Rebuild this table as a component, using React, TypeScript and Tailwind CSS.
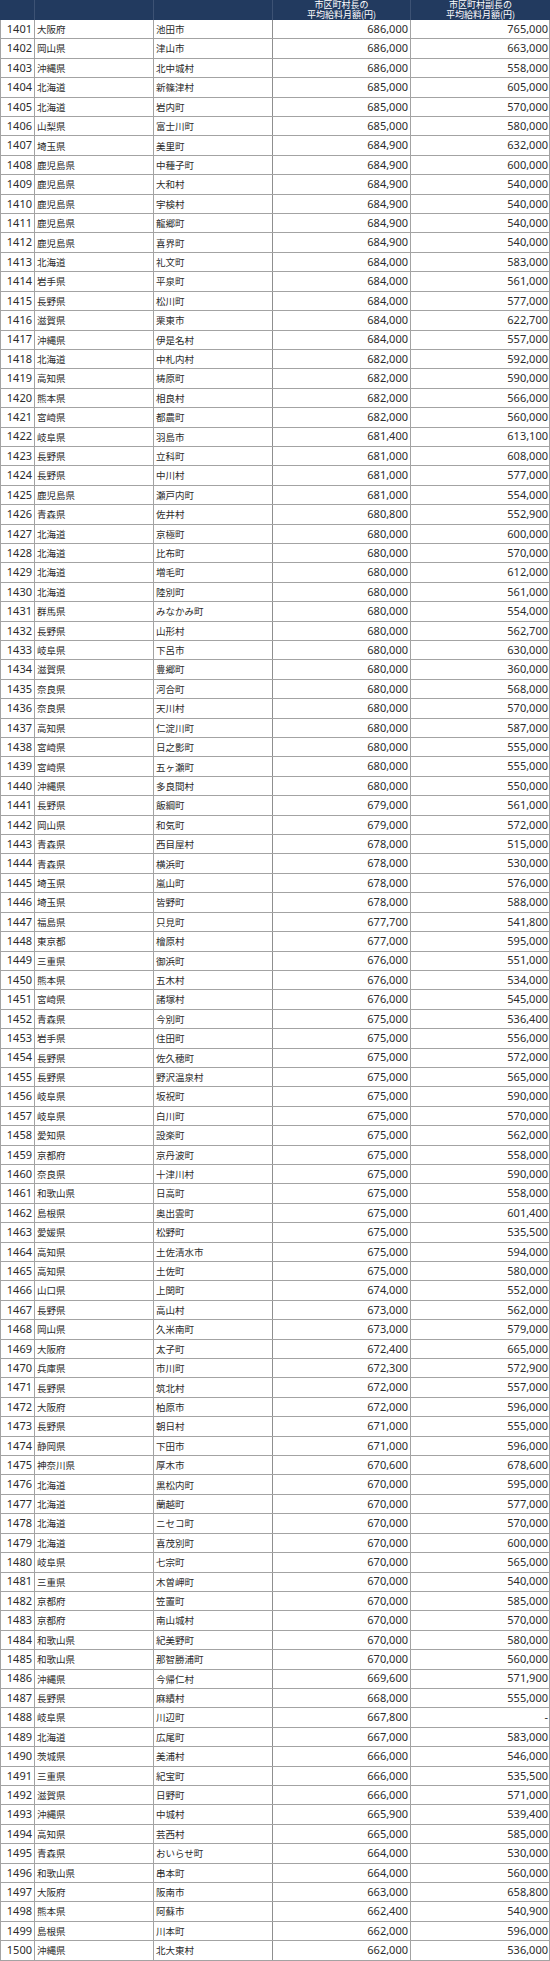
const rows: [string, string, string, string][] = [
  ["大阪府", "池田市", "686,000", "765,000"],
  ["岡山県", "津山市", "686,000", "663,000"],
  ["沖縄県", "北中城村", "686,000", "558,000"],
  ["北海道", "新篠津村", "685,000", "605,000"],
  ["北海道", "岩内町", "685,000", "570,000"],
  ["山梨県", "富士川町", "685,000", "580,000"],
  ["埼玉県", "美里町", "684,900", "632,000"],
  ["鹿児島県", "中種子町", "684,900", "600,000"],
  ["鹿児島県", "大和村", "684,900", "540,000"],
  ["鹿児島県", "宇検村", "684,900", "540,000"],
  ["鹿児島県", "龍郷町", "684,900", "540,000"],
  ["鹿児島県", "喜界町", "684,900", "540,000"],
  ["北海道", "礼文町", "684,000", "583,000"],
  ["岩手県", "平泉町", "684,000", "561,000"],
  ["長野県", "松川町", "684,000", "577,000"],
  ["滋賀県", "栗東市", "684,000", "622,700"],
  ["沖縄県", "伊是名村", "684,000", "557,000"],
  ["北海道", "中札内村", "682,000", "592,000"],
  ["高知県", "梼原町", "682,000", "590,000"],
  ["熊本県", "相良村", "682,000", "566,000"],
  ["宮崎県", "都農町", "682,000", "560,000"],
  ["岐阜県", "羽島市", "681,400", "613,100"],
  ["長野県", "立科町", "681,000", "608,000"],
  ["長野県", "中川村", "681,000", "577,000"],
  ["鹿児島県", "瀬戸内町", "681,000", "554,000"],
  ["青森県", "佐井村", "680,800", "552,900"],
  ["北海道", "京極町", "680,000", "600,000"],
  ["北海道", "比布町", "680,000", "570,000"],
  ["北海道", "増毛町", "680,000", "612,000"],
  ["北海道", "陸別町", "680,000", "561,000"],
  ["群馬県", "みなかみ町", "680,000", "554,000"],
  ["長野県", "山形村", "680,000", "562,700"],
  ["岐阜県", "下呂市", "680,000", "630,000"],
  ["滋賀県", "豊郷町", "680,000", "360,000"],
  ["奈良県", "河合町", "680,000", "568,000"],
  ["奈良県", "天川村", "680,000", "570,000"],
  ["高知県", "仁淀川町", "680,000", "587,000"],
  ["宮崎県", "日之影町", "680,000", "555,000"],
  ["宮崎県", "五ヶ瀬町", "680,000", "555,000"],
  ["沖縄県", "多良間村", "680,000", "550,000"],
  ["長野県", "飯綱町", "679,000", "561,000"],
  ["岡山県", "和気町", "679,000", "572,000"],
  ["青森県", "西目屋村", "678,000", "515,000"],
  ["青森県", "横浜町", "678,000", "530,000"],
  ["埼玉県", "嵐山町", "678,000", "576,000"],
  ["埼玉県", "皆野町", "678,000", "588,000"],
  ["福島県", "只見町", "677,700", "541,800"],
  ["東京都", "檜原村", "677,000", "595,000"],
  ["三重県", "御浜町", "676,000", "551,000"],
  ["熊本県", "五木村", "676,000", "534,000"],
  ["宮崎県", "諸塚村", "676,000", "545,000"],
  ["青森県", "今別町", "675,000", "536,400"],
  ["岩手県", "住田町", "675,000", "556,000"],
  ["長野県", "佐久穂町", "675,000", "572,000"],
  ["長野県", "野沢温泉村", "675,000", "565,000"],
  ["岐阜県", "坂祝町", "675,000", "590,000"],
  ["岐阜県", "白川町", "675,000", "570,000"],
  ["愛知県", "設楽町", "675,000", "562,000"],
  ["京都府", "京丹波町", "675,000", "558,000"],
  ["奈良県", "十津川村", "675,000", "590,000"],
  ["和歌山県", "日高町", "675,000", "558,000"],
  ["島根県", "奥出雲町", "675,000", "601,400"],
  ["愛媛県", "松野町", "675,000", "535,500"],
  ["高知県", "土佐清水市", "675,000", "594,000"],
  ["高知県", "土佐町", "675,000", "580,000"],
  ["山口県", "上関町", "674,000", "552,000"],
  ["長野県", "高山村", "673,000", "562,000"],
  ["岡山県", "久米南町", "673,000", "579,000"],
  ["大阪府", "太子町", "672,400", "665,000"],
  ["兵庫県", "市川町", "672,300", "572,900"],
  ["長野県", "筑北村", "672,000", "557,000"],
  ["大阪府", "柏原市", "672,000", "596,000"],
  ["長野県", "朝日村", "671,000", "555,000"],
  ["静岡県", "下田市", "671,000", "596,000"],
  ["神奈川県", "厚木市", "670,600", "678,600"],
  ["北海道", "黒松内町", "670,000", "595,000"],
  ["北海道", "蘭越町", "670,000", "577,000"],
  ["北海道", "ニセコ町", "670,000", "570,000"],
  ["北海道", "喜茂別町", "670,000", "600,000"],
  ["岐阜県", "七宗町", "670,000", "565,000"],
  ["三重県", "木曽岬町", "670,000", "540,000"],
  ["京都府", "笠置町", "670,000", "585,000"],
  ["京都府", "南山城村", "670,000", "570,000"],
  ["和歌山県", "紀美野町", "670,000", "580,000"],
  ["和歌山県", "那智勝浦町", "670,000", "560,000"],
  ["沖縄県", "今帰仁村", "669,600", "571,900"],
  ["長野県", "麻績村", "668,000", "555,000"],
  ["岐阜県", "川辺町", "667,800", "-"],
  ["北海道", "広尾町", "667,000", "583,000"],
  ["茨城県", "美浦村", "666,000", "546,000"],
  ["三重県", "紀宝町", "666,000", "535,500"],
  ["滋賀県", "日野町", "666,000", "571,000"],
  ["沖縄県", "中城村", "665,900", "539,400"],
  ["高知県", "芸西村", "665,000", "585,000"],
  ["青森県", "おいらせ町", "664,000", "530,000"],
  ["和歌山県", "串本町", "664,000", "560,000"],
  ["大阪府", "阪南市", "663,000", "658,800"],
  ["熊本県", "阿蘇市", "662,400", "540,900"],
  ["島根県", "川本町", "662,000", "596,000"],
  ["沖縄県", "北大東村", "662,000", "536,000"],
];

const num = "font-['Noto_Sans','Noto_Sans_CJK_JP',sans-serif] text-[11px]";
const jp = "font-['Noto_Sans_CJK_JP',sans-serif] text-[9.5px]";
const head = "font-['Noto_Sans_CJK_JP',sans-serif] text-[9px] leading-[10px]";

export default function App() {
  return (
    <div className="w-[550px] bg-white text-[#2b2b2b]">
      <div className="grid h-[20px] grid-cols-[35px_119px_119px_138px_139px] bg-[#223a5f] text-white">
        <div className="border-r border-[#3d5274]" />
        <div className="border-r border-[#3d5274]" />
        <div className="border-r border-[#3d5274]" />
        <div className={`flex flex-col items-center border-r border-[#3d5274] ${head}`}>
          <p className="h-[10px]">市区町村長の</p>
          <p className="h-[10px]">平均給料月額(円)</p>
        </div>
        <div className={`flex flex-col items-center ${head}`}>
          <p className="h-[10px]">市区町村副長の</p>
          <p className="h-[10px]">平均給料月額(円)</p>
        </div>
      </div>

      <div className="border-l border-[#a3a3a3]">
        {rows.map(([pref, city, mayor, deputy], i) => (
          <div
            key={i}
            className="grid h-[19.41px] grid-cols-[34px_119px_119px_138px_139px] border-b border-[#a3a3a3]"
          >
            <div className={`flex items-center justify-end border-r border-[#a3a3a3] pr-[2px] ${num}`}>{1401 + i}</div>
            <div className={`flex items-center border-r border-[#a3a3a3] pl-[2px] ${jp}`}>{pref}</div>
            <div className={`flex items-center border-r border-[#8f8f8f] pl-[2px] ${jp}`}>{city}</div>
            <div className={`flex items-center justify-end border-r border-[#a3a3a3] pr-[2px] ${num}`}>{mayor}</div>
            <div className={`flex items-center justify-end border-r border-[#a3a3a3] pr-[1px] ${num}`}>{deputy}</div>
          </div>
        ))}
      </div>
    </div>
  );
}
